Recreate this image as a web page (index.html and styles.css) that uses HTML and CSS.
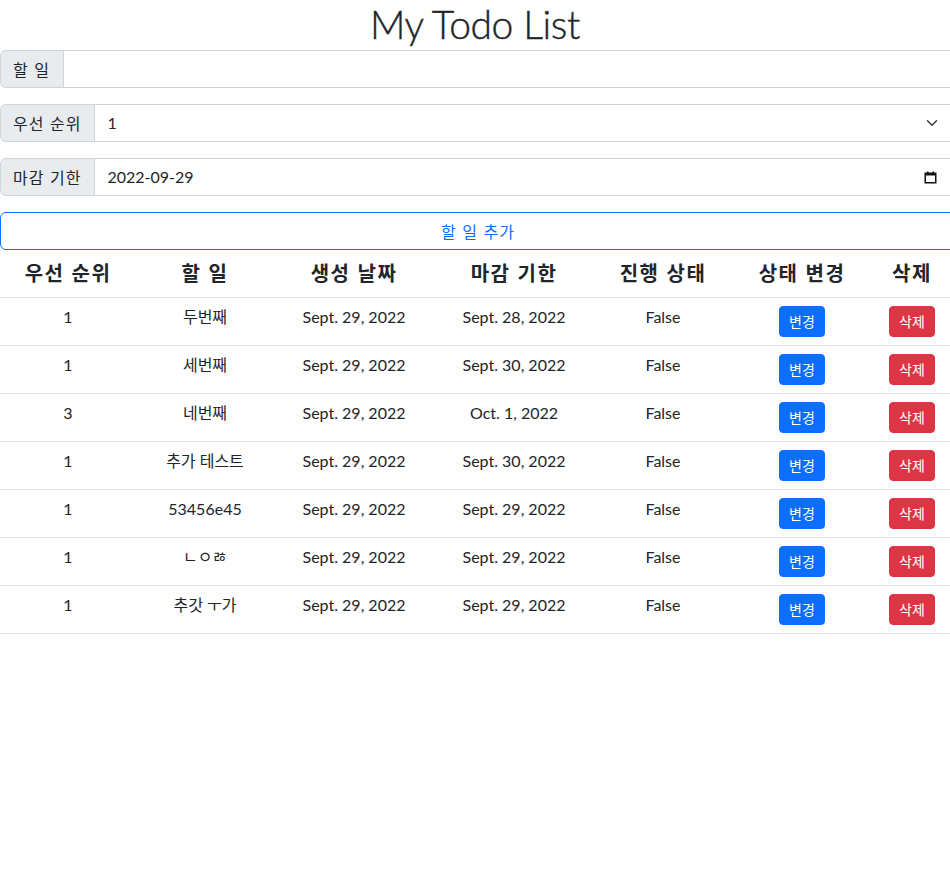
FILE: index.html
```html
<!DOCTYPE html>
<html lang="ko">
<head>
<meta charset="utf-8">
<title>My Todo List</title>
<link rel="stylesheet" href="styles.css">
</head>
<body>
<div class="page">
  <h1 class="title">My Todo List</h1>
  <form class="todo-form">
    <div class="input-group">
      <span class="group-label">할 일</span>
      <input class="form-control" type="text" value="">
    </div>
    <div class="input-group">
      <span class="group-label">우선 순위</span>
      <div class="form-control select-control">
        <span>1</span>
        <svg class="ctl-icon" width="16" height="12" viewBox="0 0 16 16"><path fill="none" stroke="#343a40" stroke-linecap="round" stroke-linejoin="round" stroke-width="2" d="M2 5l6 6 6-6"/></svg>
      </div>
    </div>
    <div class="input-group">
      <span class="group-label">마감 기한</span>
      <div class="form-control date-control">
        <span>2022-09-29</span>
        <svg class="ctl-icon" width="13" height="13" viewBox="0 0 13 13"><rect x="1.25" y="2.25" width="10.5" height="9.5" fill="none" stroke="#111" stroke-width="1.5"/><rect x="1" y="2" width="11" height="2.5" fill="#111"/><rect x="3" y="0.5" width="1.5" height="2" fill="#111"/><rect x="8.5" y="0.5" width="1.5" height="2" fill="#111"/></svg>
      </div>
    </div>
    <button type="button" class="btn-add">할 일 추가</button>
  </form>
  <table class="todo-table">
    <colgroup>
      <col class="c1"><col class="c2"><col class="c3"><col class="c4"><col class="c5"><col class="c6"><col class="c7">
    </colgroup>
    <thead>
      <tr><th>우선 순위</th><th>할 일</th><th>생성 날짜</th><th>마감 기한</th><th>진행 상태</th><th>상태 변경</th><th>삭제</th></tr>
    </thead>
    <tbody>
      <tr><td>1</td><td>두번째</td><td>Sept. 29, 2022</td><td>Sept. 28, 2022</td><td>False</td><td><button class="btn-sm blue">변경</button></td><td><button class="btn-sm red">삭제</button></td></tr>
      <tr><td>1</td><td>세번째</td><td>Sept. 29, 2022</td><td>Sept. 30, 2022</td><td>False</td><td><button class="btn-sm blue">변경</button></td><td><button class="btn-sm red">삭제</button></td></tr>
      <tr><td>3</td><td>네번째</td><td>Sept. 29, 2022</td><td>Oct. 1, 2022</td><td>False</td><td><button class="btn-sm blue">변경</button></td><td><button class="btn-sm red">삭제</button></td></tr>
      <tr><td>1</td><td>추가 테스트</td><td>Sept. 29, 2022</td><td>Sept. 30, 2022</td><td>False</td><td><button class="btn-sm blue">변경</button></td><td><button class="btn-sm red">삭제</button></td></tr>
      <tr><td>1</td><td>53456e45</td><td>Sept. 29, 2022</td><td>Sept. 29, 2022</td><td>False</td><td><button class="btn-sm blue">변경</button></td><td><button class="btn-sm red">삭제</button></td></tr>
      <tr><td>1</td><td>ㄴㅇㅀ</td><td>Sept. 29, 2022</td><td>Sept. 29, 2022</td><td>False</td><td><button class="btn-sm blue">변경</button></td><td><button class="btn-sm red">삭제</button></td></tr>
      <tr><td>1</td><td>추갓 ㅜ가</td><td>Sept. 29, 2022</td><td>Sept. 29, 2022</td><td>False</td><td><button class="btn-sm blue">변경</button></td><td><button class="btn-sm red">삭제</button></td></tr>
    </tbody>
  </table>
</div>
</body>
</html>
```
FILE: styles.css
```css
* { box-sizing: border-box; }
html, body { margin: 0; padding: 0; overflow: hidden; background: #fff; }
body {
  font-family: "Segoe UI", Lato, "Noto Sans CJK KR", sans-serif;
  font-size: 16px;
  line-height: 1.5;
  color: #212529;
}
.page { width: 960px; }
.title {
  margin: 0 0 2px;
  padding-right: 10px;
  font-size: 39px;
  font-weight: 300;
  letter-spacing: -0.4px;
  line-height: 48px;
  text-align: center;
  -webkit-text-stroke: 0.4px #212529;
}
.todo-form { display: flex; flex-direction: column; gap: 16px; }
.input-group { display: flex; height: 38px; }
.group-label {
  display: flex;
  align-items: center;
  padding: 0 13px 0 12px;
  background: #e9ecef;
  border: 1px solid #ced4da;
  border-radius: 6px 0 0 6px;
  white-space: nowrap;
  font-family: "Noto Sans CJK KR", sans-serif;
  letter-spacing: 1px;
}
.form-control {
  flex: 1;
  min-width: 0;
  margin-left: -1px;
  border: 1px solid #ced4da;
  border-radius: 0 6px 6px 0;
  padding: 6px 12px;
  font: inherit;
  color: #212529;
  background: #fff;
}
.select-control, .date-control {
  display: flex;
  align-items: center;
  justify-content: space-between;
}
.select-control { padding-right: 19px; }
.date-control { padding-right: 22px; }
.btn-add {
  height: 38px;
  width: 100%;
  border: 1px solid #0d6efd;
  border-radius: 6px;
  background: #fff;
  color: #0d6efd;
  font-family: "Noto Sans CJK KR", sans-serif;
  font-size: 16px;
  letter-spacing: 1px;
  padding-right: 10px;
  cursor: pointer;
}
.todo-table {
  width: 952px;
  table-layout: fixed;
  border-collapse: collapse;
  text-align: center;
}
.c1 { width: 136px; }
.c2 { width: 138px; }
.c3 { width: 160px; }
.c4 { width: 160px; }
.c5 { width: 138px; }
.c6 { width: 140px; }
.c7 { width: 80px; }
.todo-table th {
  height: 47px;
  padding: 7px 8px 8px;
  font-family: "Noto Sans CJK KR", sans-serif;
  font-size: 20px;
  font-weight: 700;
  letter-spacing: 1.5px;
  line-height: 30px;
  border-bottom: 1px solid #dee2e6;
  vertical-align: middle;
}
.todo-table td {
  padding: 7px 8px 8px;
  height: 48px;
  border-bottom: 1px solid #dee2e6;
  vertical-align: top;
  line-height: 24px;
}
.btn-sm {
  display: inline-block;
  margin-top: 1px;
  padding: 4px 9px;
  border: 1px solid transparent;
  border-radius: 4px;
  font-family: "Noto Sans CJK KR", sans-serif;
  font-size: 14px;
  line-height: 21px;
  color: #fff;
  cursor: pointer;
}
.btn-sm.blue { background: #0d6efd; border-color: #0d6efd; }
.btn-sm.red { background: #dc3545; border-color: #dc3545; }
```
